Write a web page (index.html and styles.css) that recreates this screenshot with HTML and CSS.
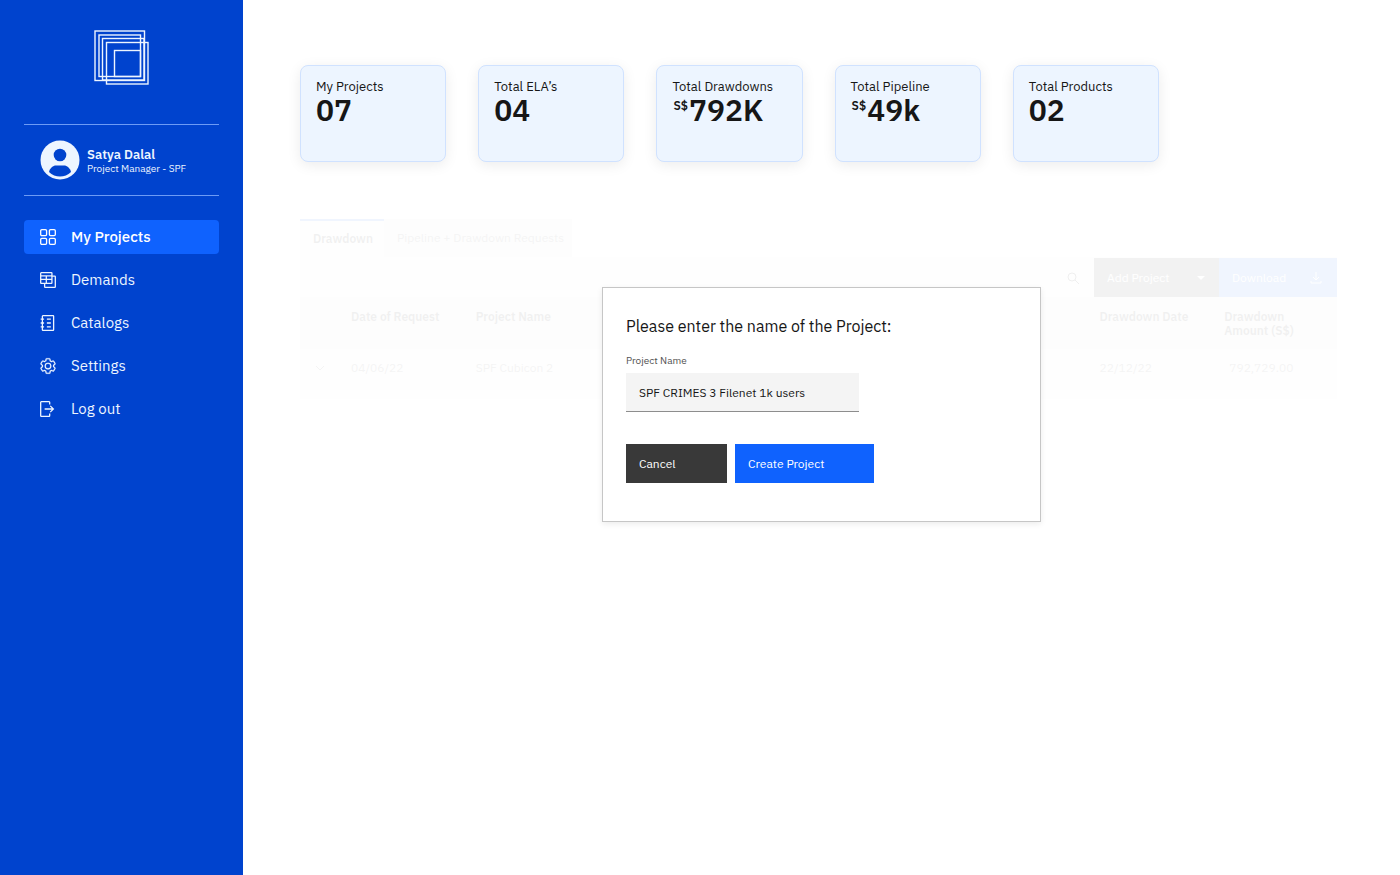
FILE: index.html
```
<!doctype html>
<html lang="en">
    <head>
        <meta charset="utf-8" />
        <title>My Projects</title>
        <link rel="stylesheet" href="styles.css">
    </head>
    <body>
        <aside class="sidebar">
            <svg class="logo" viewBox="0 0 55 55">
                <rect x="1" y="1" width="49.5" height="49.5" />
                <rect x="5" y="5" width="41.5" height="41.5" />
                <rect x="8.5" y="8.5" width="41.5" height="41.5" />
                <rect x="12.5" y="12.5" width="41.5" height="41.5" />
                <rect x="20.5" y="20.5" width="26" height="26" />
            </svg>
            <div class="profile">
                <svg class="avatar" viewBox="0 0 40 40">
                    <circle cx="20" cy="20" r="19.5" fill="#edf5ff" />
                    <circle cx="20" cy="15" r="6.3" fill="#0043ce" />
                    <path d="M9 32c1-4 4-6.5 7-6.5h8c3 0 6 2.5 7 6.5-3 3-7 4.5-11 4.5s-8-1.5-11-4.5z" fill="#0043ce" />
                </svg>
                <div>
                    <div class="name">Satya Dalal</div>
                    <div class="role">Project Manager - SPF</div>
                </div>
            </div>
            <nav>
                <a class="active" href="#">
                    <svg viewBox="0 0 32 32">
                        <rect x="3" y="3" width="10.5" height="10.5" rx="2" />
                        <rect x="18.5" y="3" width="10.5" height="10.5" rx="2" />
                        <rect x="3" y="18.5" width="10.5" height="10.5" rx="2" />
                        <rect x="18.5" y="18.5" width="10.5" height="10.5" rx="2" />
                    </svg>
                    My Projects
                </a>
                <a href="#">
                    <svg viewBox="0 0 32 32">
                        <rect x="3" y="3" width="20" height="19" rx="1" />
                        <path d="M3 8.5h20M3 15h20M13 8.5v13.5M23 9h5a1 1 0 0 1 1 1v18a1 1 0 0 1-1 1h-17a1 1 0 0 1-1-1v-6" />
                    </svg>
                    Demands
                </a>
                <a href="#">
                    <svg viewBox="0 0 32 32">
                        <rect x="6" y="3" width="20" height="26" rx="1" />
                        <path d="M3 9h6M3 16h6M3 23h6M14 9h7M14 16h7M14 23h7" />
                    </svg>
                    Catalogs
                </a>
                <a href="#">
                    <svg class="filled" viewBox="0 0 32 32">
                        <path d="M27,16.76c0-.25,0-.5,0-.76s0-.51,0-.77l1.92-1.68A2,2,0,0,0,29.3,11L26.94,7a2,2,0,0,0-1.73-1,2,2,0,0,0-.64.1l-2.43.82a11.35,11.35,0,0,0-1.31-.75l-.51-2.52a2,2,0,0,0-2-1.61H13.64a2,2,0,0,0-2,1.61l-.51,2.52a11.48,11.48,0,0,0-1.32.75L7.43,6.06A2,2,0,0,0,6.79,6,2,2,0,0,0,5.06,7L2.7,11a2,2,0,0,0,.41,2.51L5,15.24c0,.25,0,.5,0,.76s0,.51,0,.77L3.11,18.45A2,2,0,0,0,2.7,21L5.06,25a2,2,0,0,0,1.73,1,2,2,0,0,0,.64-.1l2.43-.82a11.35,11.35,0,0,0,1.31.75l.51,2.52a2,2,0,0,0,2,1.61h4.72a2,2,0,0,0,2-1.61l.51-2.52a11.48,11.48,0,0,0,1.32-.75l2.42.82a2,2,0,0,0,.64.1,2,2,0,0,0,1.73-1L29.3,21a2,2,0,0,0-.41-2.51ZM25.21,24l-3.43-1.16a8.86,8.86,0,0,1-2.71,1.57L18.36,28H13.64l-.71-3.55a9.36,9.36,0,0,1-2.7-1.57L6.79,24,4.43,20l2.72-2.4a8.9,8.9,0,0,1,0-3.13L4.43,12,6.79,8l3.43,1.16a8.86,8.86,0,0,1,2.71-1.57L13.64,4h4.72l.71,3.55a9.36,9.36,0,0,1,2.7,1.57L25.21,8,27.57,12l-2.72,2.4a8.9,8.9,0,0,1,0,3.13L27.57,20Z" />
                        <path d="M16,22a6,6,0,1,1,6-6A5.94,5.94,0,0,1,16,22Zm0-10a3.91,3.91,0,0,0-4,4,3.91,3.91,0,0,0,4,4,3.91,3.91,0,0,0,4-4A3.91,3.91,0,0,0,16,12Z" />
                    </svg>
                    Settings
                </a>
                <a href="#">
                    <svg viewBox="0 0 32 32">
                        <path d="M19 8V4a1 1 0 0 0-1-1H4a1 1 0 0 0-1 1v24a1 1 0 0 0 1 1h14a1 1 0 0 0 1-1v-4M10 16h15M20 10.5l5.5 5.5-5.5 5.5" />
                    </svg>
                    Log out
                </a>
            </nav>
        </aside>
        <main>
            <section class="cards">
                <div class="card">
                    <div>My Projects</div>
                    <div class="number">07</div>
                </div>
                <div class="card">
                    <div>Total ELA’s</div>
                    <div class="number">04</div>
                </div>
                <div class="card">
                    <div>Total Drawdowns</div>
                    <div class="number"><span class="currency">S$</span>792K</div>
                </div>
                <div class="card">
                    <div>Total Pipeline</div>
                    <div class="number"><span class="currency">S$</span>49k</div>
                </div>
                <div class="card">
                    <div>Total Products</div>
                    <div class="number">02</div>
                </div>
            </section>

            <section class="requests">
                <div class="tabs">
                    <button class="selected">Drawdown</button>
                    <button>Pipeline + Drawdown Requests</button>
                </div>
                <div class="toolbar">
                    <button class="search" aria-label="Search">
                        <svg viewBox="0 0 16 16">
                            <circle cx="7" cy="7" r="4" />
                            <path d="M10 10l4 4" />
                        </svg>
                    </button>
                    <button class="secondary add">
                        Add Project
                        <svg viewBox="0 0 16 16"><path d="M4 6h8l-4 4z" fill="currentColor" stroke="none" /></svg>
                    </button>
                    <button class="primary download">
                        Download
                        <svg viewBox="0 0 16 16"><path d="M8 2v8M5 7l3 3 3-3M3 11v2h10v-2" /></svg>
                    </button>
                </div>
                <table>
                    <thead>
                        <tr>
                            <th class="expand"></th>
                            <th>Date of Request</th>
                            <th>Project Name</th>
                            <th></th>
                            <th></th>
                            <th></th>
                            <th></th>
                            <th>Drawdown Date</th>
                            <th>Drawdown<br>Amount (S$)</th>
                        </tr>
                    </thead>
                    <tbody>
                        <tr>
                            <td class="expand">
                                <svg viewBox="0 0 16 16"><path d="M4 5l4 4 4-4" /></svg>
                            </td>
                            <td>04/06/22</td>
                            <td>SPF Cubicon 2</td>
                            <td></td>
                            <td></td>
                            <td></td>
                            <td></td>
                            <td>22/12/22</td>
                            <td class="amount">792,729.00</td>
                        </tr>
                    </tbody>
                </table>
            </section>

            <div class="overlay">
                <form class="modal">
                    <h1>Please enter the name of the Project:</h1>
                    <label for="projectName">Project Name</label>
                    <input type="text" id="projectName" value="SPF CRIMES 3 Filenet 1k users" />
                    <div class="buttons">
                        <button type="button" class="secondary cancel">Cancel</button>
                        <button type="button" class="primary create">Create Project</button>
                    </div>
                </form>
            </div>
        </main>
    </body>
</html>
```

FILE: styles.css
```
* {
    box-sizing: border-box;
}

body {
    display: flex;
    margin: 0;
    min-height: 100vh;
    font-family: "IBM Plex Sans", Roboto, sans-serif;
    font-size: 12px;
    line-height: 14px;
    color: #161616;
    background: #ffffff;
}

button,
input {
    font: inherit;
    border: 0;
    border-radius: 0;
}

button {
    padding: 0 13px;
    text-align: left;
    white-space: nowrap;
    background: none;
}

svg {
    flex-shrink: 0;
    width: 16px;
    height: 16px;
    fill: none;
    stroke: currentColor;
}

/* sidebar */

.sidebar {
    display: flex;
    flex-direction: column;
    flex-shrink: 0;
    width: 243px;
    padding: 30px 24px;
    color: #edf5ff;
    background: #0043ce;
}

.logo {
    align-self: center;
    width: 55px;
    height: 55px;
    margin-bottom: 39px;
    stroke-width: 1.4;
}

.profile {
    display: flex;
    align-items: center;
    gap: 7px;
    height: 72px;
    padding-left: 16px;
    border-top: 1px solid #6d9bf5;
    border-bottom: 1px solid #6d9bf5;
}

.avatar {
    width: 40px;
    height: 40px;
    stroke: none;
}

.name {
    padding-top: 2px;
    font-size: 13px;
    line-height: 16px;
    font-weight: 600;
}

.role {
    font-size: 10px;
    line-height: 12px;
}

nav {
    display: flex;
    flex-direction: column;
    gap: 9px;
    margin-top: 24px;
}

nav a {
    display: flex;
    align-items: center;
    gap: 14px;
    height: 34px;
    padding-left: 15px;
    border-radius: 4px;
    font-size: 15px;
    color: #edf5ff;
    text-decoration: none;
}

nav a.active {
    font-weight: 500;
    color: #ffffff;
    background: #0f62fe;
}

nav svg {
    width: 18px;
    height: 18px;
    stroke-width: 2.3;
}

nav svg.filled {
    fill: currentColor;
    stroke-width: 0.3;
}

/* main */

main {
    position: relative;
    flex: 1;
    padding: 65px 63px 0 57px;
}

.cards {
    display: flex;
    gap: 32px;
    max-width: 859px;
}

.card {
    flex: 1;
    height: 97px;
    padding: 12px 0 0 15px;
    border: 1px solid #d0e2ff;
    border-radius: 8px;
    font-size: 13px;
    line-height: 18px;
    background: #edf5ff;
    box-shadow: 0 3px 14px rgba(0, 0, 0, 0.08);
}

.number {
    display: flex;
    font-size: 30px;
    line-height: 28px;
    font-weight: 600;
}

.currency {
    margin: 0 1px;
    font-size: 12px;
    line-height: 20px;
}

/* faded while the dialog is open */
.requests {
    margin-top: 57px;
    opacity: 0.06;
    background: #f4f4f4;
}

.tabs {
    display: flex;
    height: 38px;
    background: #ffffff;
}

.tabs button {
    width: 188px;
    color: #525252;
    background: #e0e0e0;
}

.tabs .selected {
    width: 84px;
    border-top: 2px solid #0f62fe;
    font-weight: 600;
    color: #161616;
    background: #f4f4f4;
}

.toolbar {
    display: flex;
    justify-content: flex-end;
    padding-top: 1px;
}

.toolbar button {
    display: flex;
    align-items: center;
    justify-content: space-between;
    height: 39px;
}

.toolbar .add {
    width: 125px;
    padding-right: 10px;
}

.toolbar .download {
    width: 118px;
}

.primary {
    color: #ffffff;
    background: #0f62fe;
}

.secondary {
    color: #ffffff;
    background: #393939;
}

table {
    width: 100%;
    table-layout: fixed;
    border-collapse: collapse;
}

th,
td {
    padding: 13px 0 0 12px;
    text-align: left;
    vertical-align: top;
}

th {
    height: 52px;
    font-weight: 600;
    background: #e0e0e0;
}

td {
    height: 50px;
    padding-top: 12px;
    color: #525252;
}

.expand {
    width: 39px;
}

.amount {
    padding-left: 17px;
}

/* dialog */

.overlay {
    position: absolute;
    inset: 0;
    display: flex;
    align-items: flex-start;
    justify-content: center;
    padding-top: 287px;
}

.modal {
    width: 439px;
    padding: 27px 23px 38px;
    border: 1px solid #c6c6c6;
    background: #ffffff;
    box-shadow: 0 2px 6px rgba(0, 0, 0, 0.08);
}

h1 {
    margin: 0 0 17px;
    font-size: 16px;
    line-height: 22px;
    font-weight: normal;
}

label {
    display: block;
    margin-bottom: 5px;
    font-size: 10px;
    color: #525252;
}

.modal input {
    display: block;
    width: 233px;
    height: 39px;
    padding: 0 13px;
    border-bottom: 1px solid #8d8d8d;
    color: #161616;
    background: #f4f4f4;
}

.buttons {
    display: flex;
    gap: 8px;
    margin-top: 32px;
}

.buttons button {
    height: 39px;
}

.cancel {
    width: 101px;
}

.create {
    width: 139px;
}
```
